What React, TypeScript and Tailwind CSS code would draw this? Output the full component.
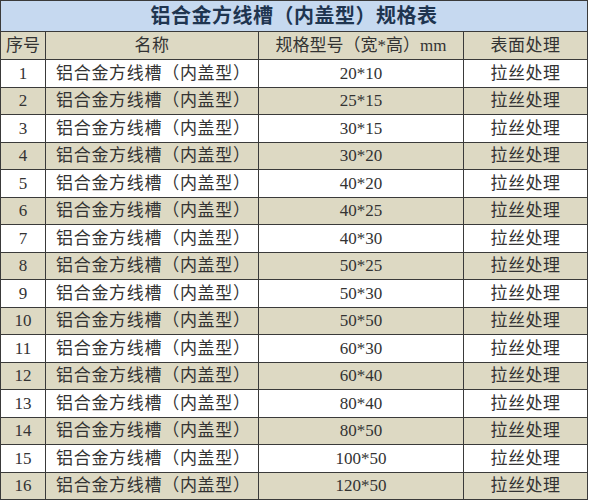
const SPECS = [
  "20*10",
  "25*15",
  "30*15",
  "30*20",
  "40*20",
  "40*25",
  "40*30",
  "50*25",
  "50*30",
  "50*50",
  "60*30",
  "60*40",
  "80*40",
  "80*50",
  "100*50",
  "120*50",
];

const FONT = {
  fontFamily: '"Liberation Serif", "Noto Sans CJK SC", serif',
};

export default function App() {
  return (
    <div className="w-[590px] h-[500px] overflow-hidden bg-white" style={FONT}>
      <div className="w-[588px] border-l border-t border-r border-[#3a3a3a]">
        <div className="h-[31px] flex items-center justify-center bg-[#c6d9f0] border-b border-[#3a3a3a]">
          <span className="text-[20px] font-bold text-[#1f3550] tracking-[0.5px]">
            铝合金方线槽（内盖型）规格表
          </span>
        </div>

        <div className="grid grid-cols-[45px_213px_205px_1fr] h-[28px] bg-[#ddd9c3] border-b border-[#3a3a3a] text-[17px] text-[#333]">
          <div className="flex items-center justify-center border-r border-[#3a3a3a]">序号</div>
          <div className="flex items-center justify-center border-r border-[#3a3a3a] tracking-[0.5px]">
            名称
          </div>
          <div className="flex items-center justify-center border-r border-[#3a3a3a]">
            规格型号（宽*高）mm
          </div>
          <div className="flex items-center justify-center tracking-[0.5px]">表面处理</div>
        </div>

        {SPECS.map((spec, i) => (
          <div
            key={spec}
            className={`grid grid-cols-[45px_213px_205px_1fr] h-[27.5px] border-b border-[#3a3a3a] text-[17px] text-[#333] ${
              i % 2 === 1 ? "bg-[#ddd9c3]" : "bg-white"
            }`}
          >
            <div className="flex items-center justify-center border-r border-[#3a3a3a]">{i + 1}</div>
            <div className="flex items-center pl-[10px] border-r border-[#3a3a3a] tracking-[0.7px]">
              铝合金方线槽（内盖型）
            </div>
            <div className="flex items-center justify-center border-r border-[#3a3a3a]">{spec}</div>
            <div className="flex items-center justify-center tracking-[0.5px]">拉丝处理</div>
          </div>
        ))}
      </div>
    </div>
  );
}
